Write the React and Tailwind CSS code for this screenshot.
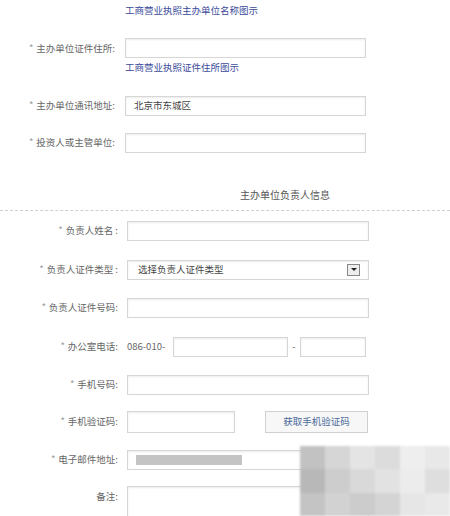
import React from "react";

const font = { fontFamily: '"Noto Sans CJK SC", "Liberation Sans", sans-serif' };

const Field = ({ className = "", children }) => (
  <div className={`h-[20px] border border-[#d6d6d6] bg-white shadow-[inset_0_1px_2px_rgba(0,0,0,0.08)] flex items-center px-[8px] text-[9.5px] text-[#444] ${className}`}>
    {children}
  </div>
);

const Row = ({ label, labelW, gap, mt, children, required = true }) => (
  <div className={`flex items-center ${mt}`}>
    <div className={`${labelW} shrink-0 text-right text-[9.5px] text-[#666] ${gap}`}>
      {required && <span className="text-[#999] mr-[3px]">*</span>}
      {label}
    </div>
    {children}
  </div>
);

export default function App() {
  return (
    <div className="relative w-[450px] h-[516px] overflow-hidden bg-white" style={font}>
      {/* top section */}
      <div className="pl-[125px] pt-[3px] text-[9.5px] text-[#3b4a9a]">工商营业执照主办单位名称图示</div>

      <Row label="主办单位证件住所:" labelW="w-[125px]" gap="pr-[10px]" mt="mt-[21px]">
        <Field className="w-[241px]" />
      </Row>
      <div className="pl-[125px] mt-[2px] text-[9.5px] text-[#3b4a9a]">工商营业执照证件住所图示</div>

      <Row label="主办单位通讯地址:" labelW="w-[125px]" gap="pr-[10px]" mt="mt-[21px]">
        <Field className="w-[241px]">北京市东城区</Field>
      </Row>

      <Row label="投资人或主管单位:" labelW="w-[125px]" gap="pr-[10px]" mt="mt-[17px]">
        <Field className="w-[241px]" />
      </Row>

      <div className="mt-[34px] pl-[240px] text-[10px] text-[#555]">主办单位负责人信息</div>
      <div className="mt-[8px] border-t border-dashed border-[#cfcfcf]" />

      {/* person section */}
      <Row label="负责人姓名 :" labelW="w-[127px]" gap="pr-[9px]" mt="mt-[10px]">
        <Field className="w-[242px]" />
      </Row>

      <Row label="负责人证件类型 :" labelW="w-[127px]" gap="pr-[9px]" mt="mt-[19px]">
        <Field className="w-[242px] justify-between">
          <span className="pl-[2px]">选择负责人证件类型</span>
          <span className="w-[13px] h-[12px] border border-[#888] bg-[#eee] flex items-center justify-center">
            <span className="block w-0 h-0 border-l-[3px] border-r-[3px] border-t-[3px] border-l-transparent border-r-transparent border-t-[#222]" />
          </span>
        </Field>
      </Row>

      <Row label="负责人证件号码:" labelW="w-[127px]" gap="pr-[9px]" mt="mt-[18px]">
        <Field className="w-[242px]" />
      </Row>

      <Row label="办公室电话:" labelW="w-[127px]" gap="pr-[9px]" mt="mt-[19px]">
        <span className="text-[9.5px] text-[#666] w-[46px]">086-010-</span>
        <Field className="w-[115px]" />
        <span className="text-[9.5px] text-[#666] w-[12px] text-center">-</span>
        <Field className="w-[66px]" />
      </Row>

      <Row label="手机号码:" labelW="w-[127px]" gap="pr-[9px]" mt="mt-[18px]">
        <Field className="w-[242px]" />
      </Row>

      <Row label="手机验证码:" labelW="w-[127px]" gap="pr-[9px]" mt="mt-[16px]">
        <Field className="w-[108px] h-[22px]" />
        <button className="ml-[30px] w-[103px] h-[22px] border border-[#d0d0d0] bg-[#f7f7f7] text-[9.5px] text-[#4a6a9a]">获取手机验证码</button>
      </Row>

      <Row label="电子邮件地址:" labelW="w-[127px]" gap="pr-[9px]" mt="mt-[17px]">
        <Field className="w-[242px] px-[5px]">
          <span className="block w-[106px] h-[10px] bg-[#c4c4c4]" />
        </Field>
      </Row>

      <div className="flex items-start mt-[16px]">
        <div className="w-[127px] shrink-0 pr-[9px] pt-[3px] text-right text-[9.5px] text-[#666]">备注:</div>
        <div className="w-[242px] h-[60px] border border-[#d6d6d6] shadow-[inset_0_1px_2px_rgba(0,0,0,0.08)]" />
      </div>

      {/* mosaic watermark */}
      <div className="absolute left-[300px] top-[446px] w-[150px] h-[70px] grid grid-cols-6 grid-rows-3 blur-[1px]">
        <div className="bg-[#c2c2c2]" /><div className="bg-[#d6d6d6]" /><div className="bg-[#e4e4e4]" /><div className="bg-[#dcdcdc]" /><div className="bg-[#eeeeee]" /><div className="bg-[#e8e8e8]" />
        <div className="bg-[#b8b8b8]" /><div className="bg-[#cdcdcd]" /><div className="bg-[#d9d9d9]" /><div className="bg-[#e2e2e2]" /><div className="bg-[#ececec]" /><div className="bg-[#dedede]" />
        <div className="bg-[#c4c4c4]" /><div className="bg-[#d2d2d2]" /><div className="bg-[#cccccc]" /><div className="bg-[#d4d4d4]" /><div className="bg-[#e6e6e6]" /><div className="bg-[#e9e9e9]" />
      </div>
    </div>
  );
}
